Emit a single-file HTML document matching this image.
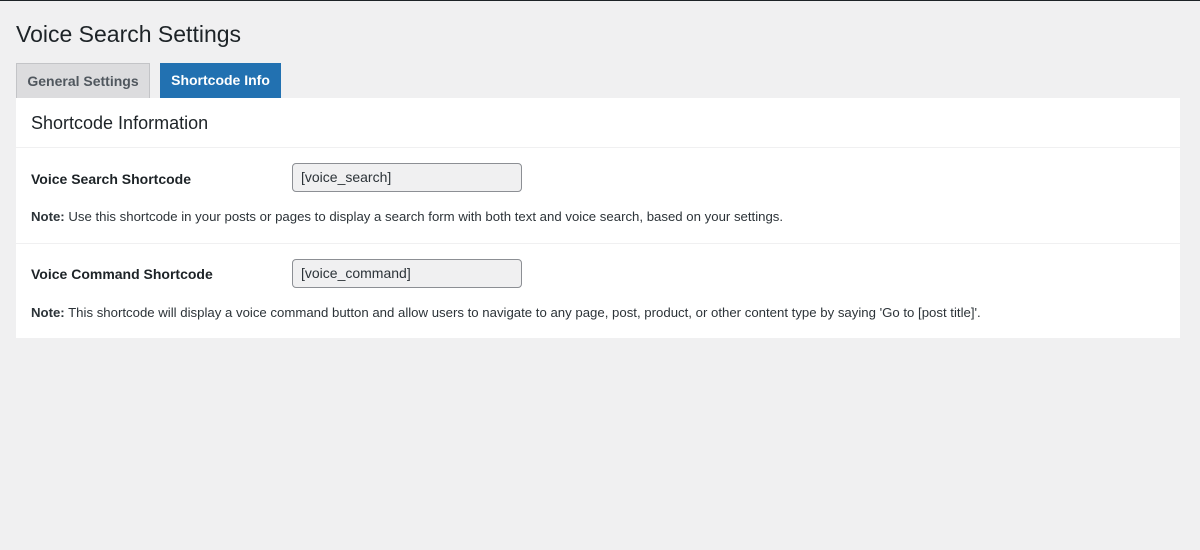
<!DOCTYPE html>
<html><head><style>
body{margin:0;width:1200px;height:550px;background:#f0f0f1;font-family:"Liberation Sans",sans-serif;color:#1d2327;position:relative;overflow:hidden}
.top{position:absolute;left:0;top:0;width:1200px;height:1px;background:#1d2327}
h1{position:absolute;left:16px;top:21px;margin:0;font-size:23px;font-weight:400;color:#1d2327}
.tab{position:absolute;top:63px;height:35px;box-sizing:border-box;font-size:14px;font-weight:700;line-height:34px;text-align:center}
.t1{left:16px;width:134px;background:#dcdcde;border:1px solid #c3c4c7;border-bottom:none;color:#50575e}
.t2{left:160px;width:121px;background:#2271b1;color:#fff}
.panel{position:absolute;left:16px;top:98px;width:1164px;height:240px;background:#fff}
.h2{position:absolute;left:15px;top:15px;font-size:18px}
.hr{position:absolute;left:0;width:1164px;height:1px;background:#f0f0f1}
.lab{position:absolute;left:15px;font-size:14px;font-weight:700}
.inp{position:absolute;left:276px;width:230px;height:29px;box-sizing:border-box;background:#f0f0f1;border:1px solid #8c8f94;border-radius:4px;font-size:14px;line-height:27px;padding-left:8px;color:#2c3338}
.note{position:absolute;left:15px;font-size:13.2px;color:#2c3338}
</style></head><body>
<div class="top"></div>
<h1>Voice Search Settings</h1>
<div class="tab t1">General Settings</div>
<div class="tab t2">Shortcode Info</div>
<div class="panel">
<div class="h2">Shortcode Information</div>
<div class="hr" style="top:49px"></div>
<div class="lab" style="top:73px">Voice Search Shortcode</div>
<div class="inp" style="top:65px">[voice_search]</div>
<div class="note" style="top:111px"><b>Note:</b> Use this shortcode in your posts or pages to display a search form with both text and voice search, based on your settings.</div>
<div class="hr" style="top:145px"></div>
<div class="lab" style="top:168px">Voice Command Shortcode</div>
<div class="inp" style="top:161px">[voice_command]</div>
<div class="note" style="top:207px"><b>Note:</b> This shortcode will display a voice command button and allow users to navigate to any page, post, product, or other content type by saying 'Go to [post title]'.</div>
</div>
</body></html>
